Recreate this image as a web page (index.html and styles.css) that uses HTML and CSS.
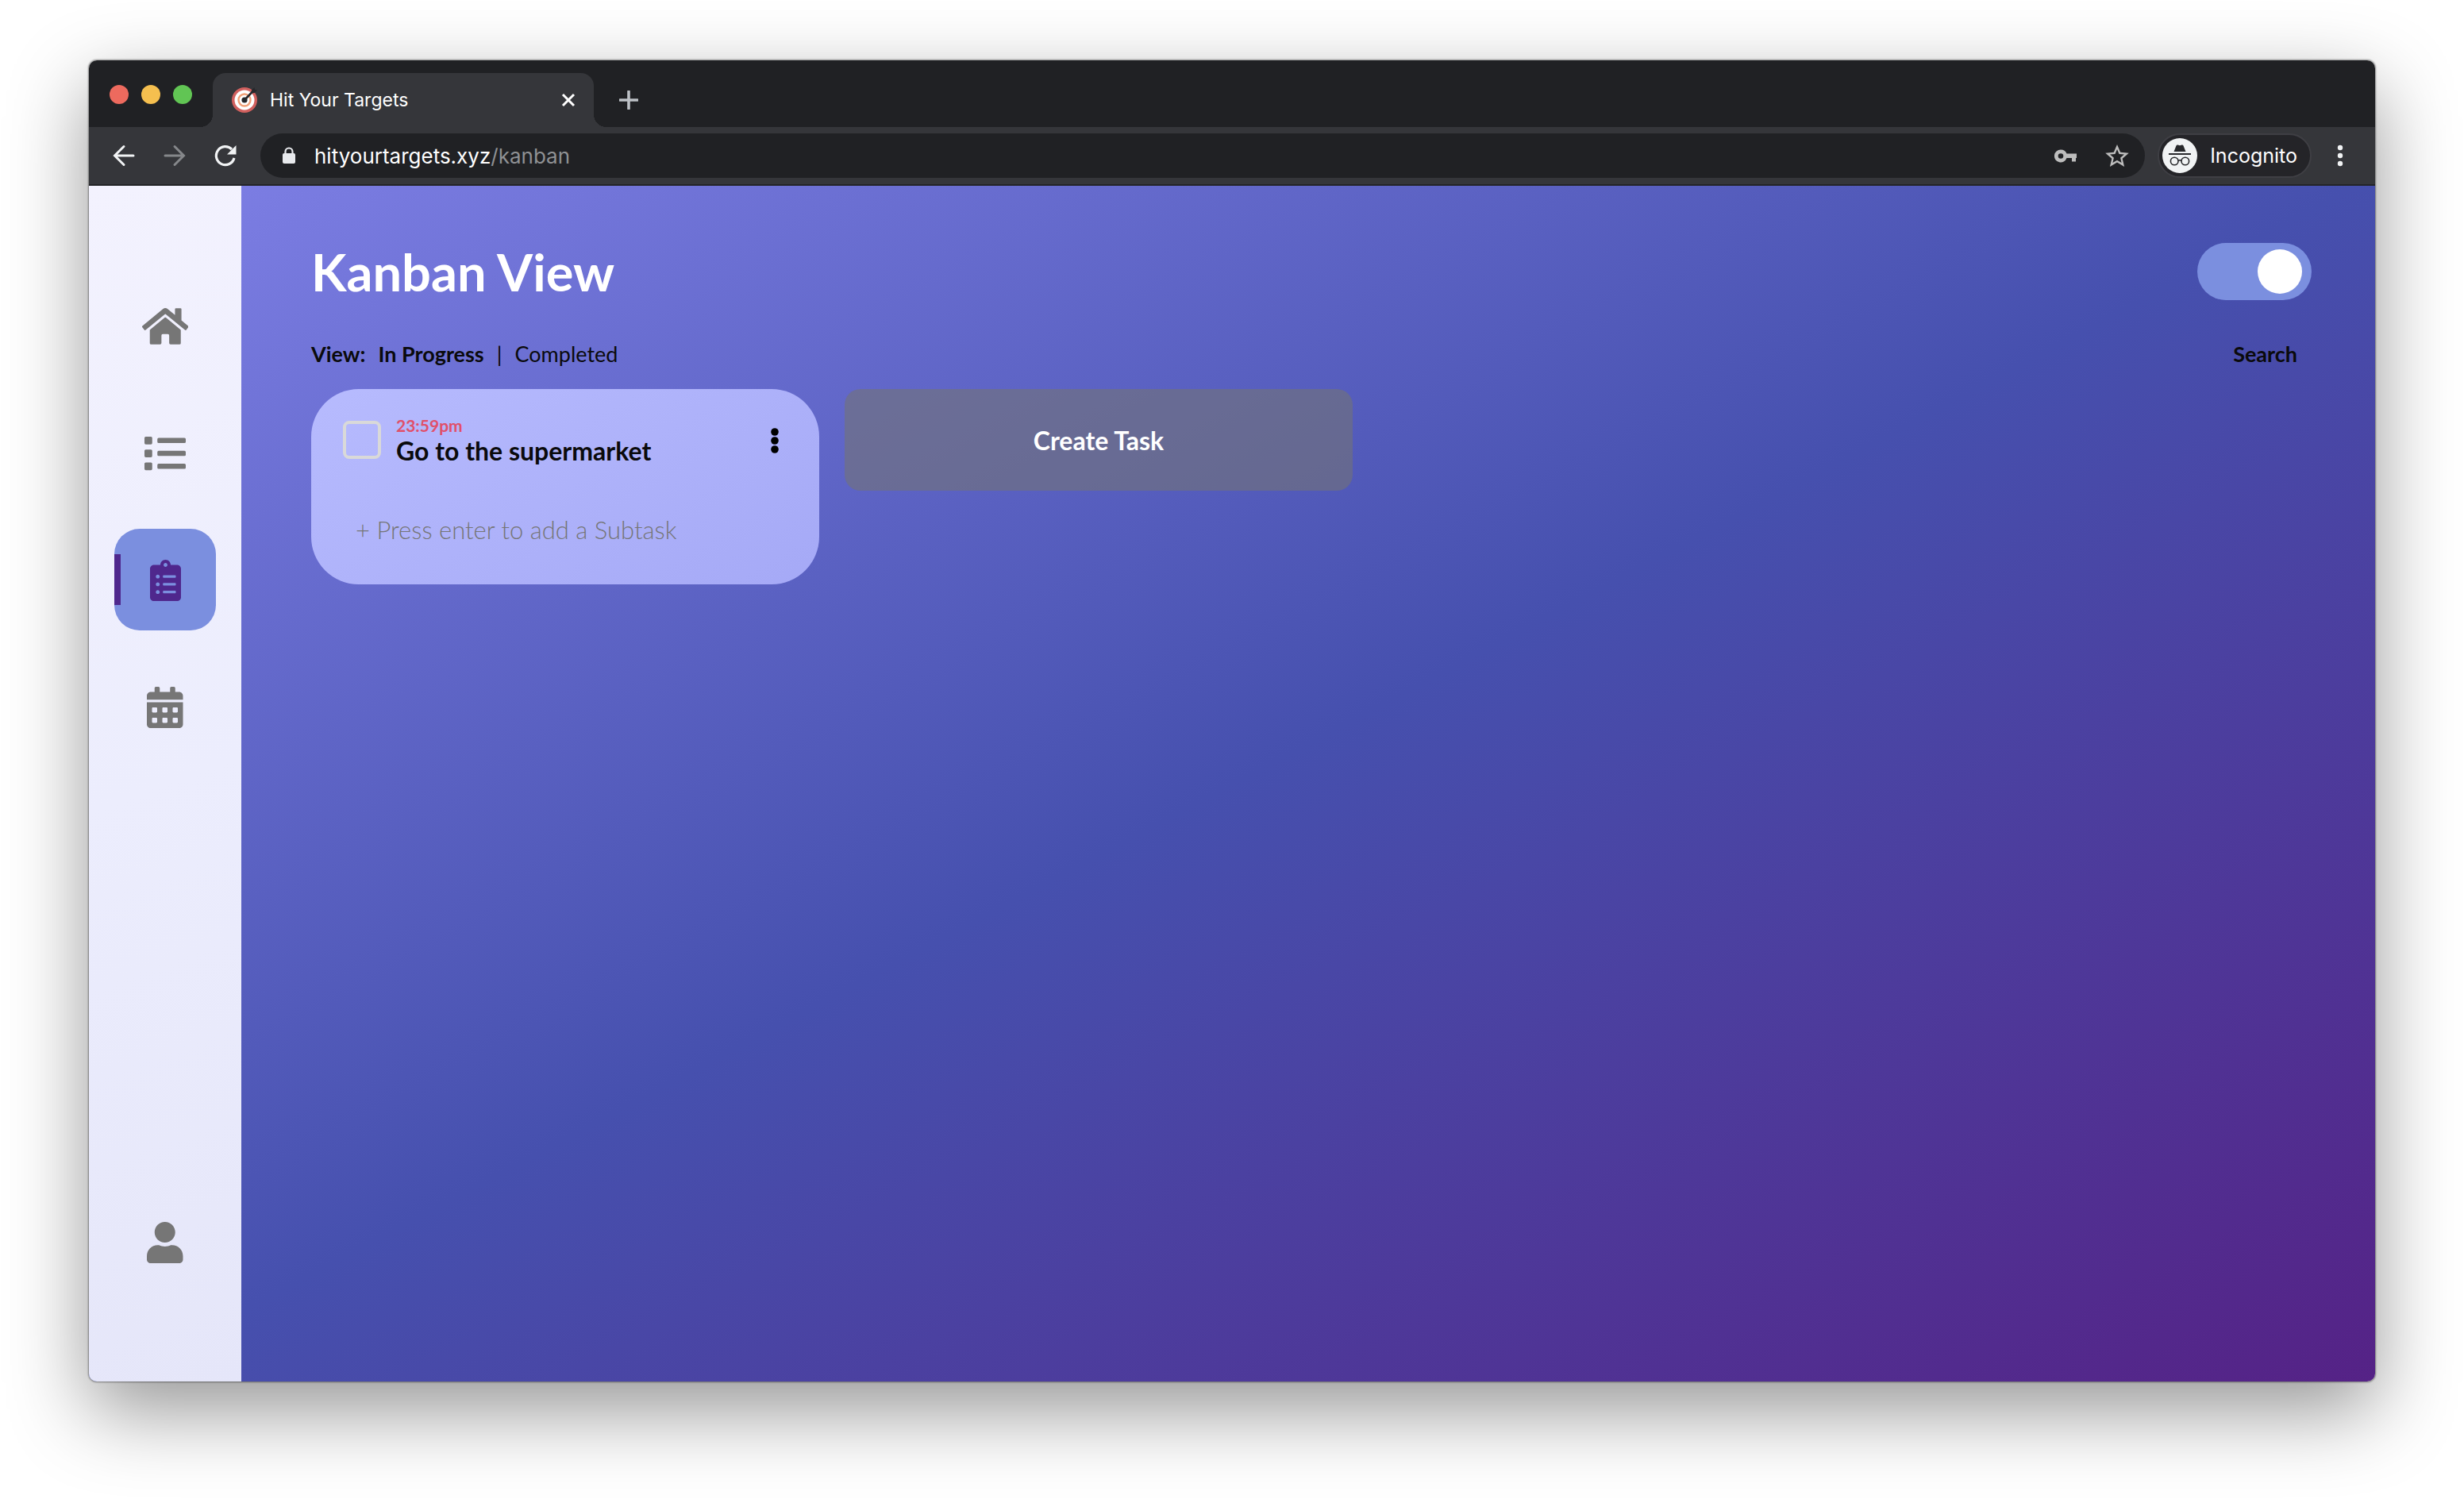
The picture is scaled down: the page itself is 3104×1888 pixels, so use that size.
FILE: index.html
```html
<!DOCTYPE html>
<html lang="en">
<head>
<meta charset="utf-8">
<meta name="viewport" content="width=device-width, initial-scale=1">
<title>Hit Your Targets</title>
<link rel="stylesheet" href="styles.css">
</head>
<body>
<div class="window">
  <header class="titlebar">
    <div class="lights">
      <button class="light light-close" aria-label="Close window"></button>
      <button class="light light-min" aria-label="Minimise window"></button>
      <button class="light light-max" aria-label="Maximise window"></button>
    </div>
    <div class="tab">
      <svg class="favicon" viewBox="0 0 32 32" aria-hidden="true">
        <circle cx="16" cy="16" r="16" fill="#d1605e"/>
        <circle cx="16" cy="16" r="12.5" fill="#fff"/>
        <circle cx="16" cy="16" r="7.5" fill="none" stroke="#f0a078" stroke-width="2.4"/>
        <circle cx="16" cy="16" r="3.6" fill="#26272b"/>
        <path d="M16 16L27 4.5" stroke="#26272b" stroke-width="2.6"/>
        <path d="M24.500 7.500L25 3.500L28.500 0L29 3L32 3.500L28.500 7Z" fill="#26272b"/>
      </svg>
      <span class="tab-title">Hit Your Targets</span>
      <button class="plain tab-close" aria-label="Close tab">
        <svg viewBox="0 0 20 20" width="20" height="20"><path d="M3 3L17 17M17 3L3 17" stroke="#fff" stroke-width="3"/></svg>
      </button>
    </div>
    <button class="plain new-tab" aria-label="New tab">
      <svg viewBox="0 0 24 24" width="24" height="24"><path d="M12 1V23M1 12H23" stroke="#bdc1c6" stroke-width="3.600" stroke-linecap="round"/></svg>
    </button>
  </header>

  <div class="toolbar">
    <button class="plain nav" aria-label="Back">
      <svg viewBox="0 0 32 32" width="32" height="32" fill="none" stroke="#f1f3f4" stroke-width="3" stroke-linecap="round"><path d="M28 16H5M16 4.500L4.500 16L16 27.500"/></svg>
    </button>
    <button class="plain nav" aria-label="Forward">
      <svg viewBox="0 0 32 32" width="32" height="32" fill="none" stroke="#85878a" stroke-width="3" stroke-linecap="round"><path d="M4 16H27M16 4.500L27.500 16L16 27.500"/></svg>
    </button>
    <button class="plain nav" aria-label="Reload">
      <svg viewBox="0 0 32 32" width="32" height="32"><path d="M27 19A11.500 11.500 0 1 1 24 8" fill="none" stroke="#f1f3f4" stroke-width="3.200"/><path d="M29.500 3V14.500H18Z" fill="#f1f3f4"/></svg>
    </button>
    <div class="omnibox">
      <svg class="lock" viewBox="0 0 16 22" aria-hidden="true"><rect y="8" width="16" height="13" rx="2" fill="#e8eaed"/><path d="M3.500 9V6A4.500 4.500 0 0 1 12.500 6V9" fill="none" stroke="#e8eaed" stroke-width="2.200"/></svg>
      <span class="url">hityourtargets.xyz<span class="url-path">/kanban</span></span>
      <button class="plain" aria-label="Saved passwords">
        <svg viewBox="0 0 28 17" width="28" height="17" fill="#bdbdbd"><path fill-rule="evenodd" d="M8 0.500A8 8 0 1 0 15.500 11H22V15.500H27V11H28V5.500H15.500A8 8 0 0 0 8 0.500ZM8 5.200A3.300 3.300 0 1 1 8 11.800A3.300 3.300 0 1 1 8 5.200Z"/></svg>
      </button>
      <button class="plain" aria-label="Bookmark this page">
        <svg viewBox="2 2 20 19" width="30" height="28" fill="#bdbdbd"><path d="M22 9.240l-7.190-.62L12 2 9.190 8.630 2 9.240l5.460 4.730L5.820 21 12 17.270 18.180 21l-1.630-7.030L22 9.240zM12 15.400l-3.760 2.270 1-4.280-3.320-2.880 4.380-.38L12 6.100l1.710 4.040 4.380.38-3.320 2.880 1 4.280L12 15.400z"/></svg>
      </button>
    </div>
    <button class="incognito">
      <svg viewBox="0 0 44 44" width="44" height="44" aria-hidden="true">
        <circle cx="22" cy="22" r="22" fill="#f1f3f4"/>
        <path d="M14.500 17L17.500 9.500Q18 8 19.500 8.500L22 9.200L24.500 8.500Q26 8 26.500 9.500L29.500 17Z" fill="#28292c"/>
        <path d="M8 20H36" stroke="#28292c" stroke-width="1.800"/>
        <g fill="none" stroke="#28292c" stroke-width="1.600"><circle cx="15.200" cy="29" r="4.800"/><circle cx="28.800" cy="29" r="4.800"/><path d="M20 28.500Q22 27 24 28.500"/></g>
      </svg>
      <span>Incognito</span>
    </button>
    <button class="plain browser-menu" aria-label="Browser menu">
      <svg viewBox="0 0 8 28" width="8" height="28" fill="#f1f3f4"><circle cx="4" cy="4" r="3.200"/><circle cx="4" cy="14" r="3.200"/><circle cx="4" cy="24" r="3.200"/></svg>
    </button>
  </div>

  <div class="app">
    <nav class="sidebar" aria-label="Main">
      <a class="side-link" href="#home" aria-label="Home">
        <svg viewBox="0 0 576 512"><path d="M280.370 148.260L96 300.110V464a16 16 0 0 0 16 16l112.060-.29a16 16 0 0 0 15.920-16V368a16 16 0 0 1 16-16h64a16 16 0 0 1 16 16v95.640a16 16 0 0 0 16 16.050L464 480a16 16 0 0 0 16-16V300L295.670 148.260a12.190 12.190 0 0 0-15.300 0zM571.600 251.470L488 182.560V44.050a12 12 0 0 0-12-12h-56a12 12 0 0 0-12 12v72.610L318.470 43a48 48 0 0 0-61 0L4.340 251.470a12 12 0 0 0-1.600 16.900l25.500 31A12 12 0 0 0 45.150 301l235.220-193.740a12.190 12.190 0 0 1 15.300 0L530.900 301a12 12 0 0 0 16.900-1.600l25.500-31a12 12 0 0 0-1.700-16.930z"/></svg>
      </a>
      <a class="side-link" href="#list" aria-label="List">
        <svg viewBox="0 0 512 512"><path d="M80 368H16a16 16 0 0 0-16 16v64a16 16 0 0 0 16 16h64a16 16 0 0 0 16-16v-64a16 16 0 0 0-16-16zm0-320H16A16 16 0 0 0 0 64v64a16 16 0 0 0 16 16h64a16 16 0 0 0 16-16V64a16 16 0 0 0-16-16zm0 160H16a16 16 0 0 0-16 16v64a16 16 0 0 0 16 16h64a16 16 0 0 0 16-16v-64a16 16 0 0 0-16-16zm416 176H176a16 16 0 0 0-16 16v32a16 16 0 0 0 16 16h320a16 16 0 0 0 16-16v-32a16 16 0 0 0-16-16zm0-320H176a16 16 0 0 0-16 16v32a16 16 0 0 0 16 16h320a16 16 0 0 0 16-16V80a16 16 0 0 0-16-16zm0 160H176a16 16 0 0 0-16 16v32a16 16 0 0 0 16 16h320a16 16 0 0 0 16-16v-32a16 16 0 0 0-16-16z"/></svg>
      </a>
      <a class="side-link active" href="#kanban" aria-label="Kanban" aria-current="page">
        <svg viewBox="0 0 384 512"><path d="M336 64h-80c0-35.300-28.700-64-64-64s-64 28.700-64 64H48C21.500 64 0 85.500 0 112v352c0 26.500 21.500 48 48 48h288c26.500 0 48-21.500 48-48V112c0-26.500-21.500-48-48-48zM96 424c-13.300 0-24-10.700-24-24s10.700-24 24-24 24 10.700 24 24-10.700 24-24 24zm0-96c-13.300 0-24-10.700-24-24s10.700-24 24-24 24 10.700 24 24-10.700 24-24 24zm0-96c-13.300 0-24-10.700-24-24s10.700-24 24-24 24 10.700 24 24-10.700 24-24 24zm96-192c13.300 0 24 10.700 24 24s-10.700 24-24 24-24-10.700-24-24 10.700-24 24-24zm128 368c0 4.400-3.600 8-8 8H168c-4.400 0-8-3.600-8-8v-16c0-4.400 3.600-8 8-8h144c4.400 0 8 3.600 8 8v16zm0-96c0 4.400-3.600 8-8 8H168c-4.400 0-8-3.600-8-8v-16c0-4.400 3.600-8 8-8h144c4.400 0 8 3.600 8 8v16zm0-96c0 4.400-3.600 8-8 8H168c-4.400 0-8-3.600-8-8v-16c0-4.400 3.600-8 8-8h144c4.400 0 8 3.600 8 8v16z"/></svg>
      </a>
      <a class="side-link" href="#calendar" aria-label="Calendar">
        <svg viewBox="0 0 448 512"><path fill-rule="evenodd" d="M0 464c0 26.500 21.500 48 48 48h352c26.500 0 48-21.500 48-48V192H0v272zm320-196c0-6.600 5.400-12 12-12h40c6.600 0 12 5.400 12 12v40c0 6.600-5.400 12-12 12h-40c-6.600 0-12-5.400-12-12v-40zm0 128c0-6.600 5.400-12 12-12h40c6.600 0 12 5.400 12 12v40c0 6.600-5.400 12-12 12h-40c-6.600 0-12-5.400-12-12v-40zM192 268c0-6.600 5.400-12 12-12h40c6.600 0 12 5.400 12 12v40c0 6.600-5.400 12-12 12h-40c-6.600 0-12-5.400-12-12v-40zm0 128c0-6.600 5.400-12 12-12h40c6.600 0 12 5.400 12 12v40c0 6.600-5.400 12-12 12h-40c-6.600 0-12-5.400-12-12v-40zM64 268c0-6.600 5.400-12 12-12h40c6.600 0 12 5.400 12 12v40c0 6.600-5.400 12-12 12H76c-6.600 0-12-5.400-12-12v-40zm0 128c0-6.600 5.400-12 12-12h40c6.600 0 12 5.400 12 12v40c0 6.600-5.400 12-12 12H76c-6.600 0-12-5.400-12-12v-40zM400 64h-48V16c0-8.800-7.200-16-16-16h-32c-8.800 0-16 7.200-16 16v48H160V16c0-8.800-7.200-16-16-16h-32c-8.800 0-16 7.200-16 16v48H48C21.500 64 0 85.500 0 112v48h448v-48c0-26.500-21.500-48-48-48z"/></svg>
      </a>
      <a class="side-link side-bottom" href="#profile" aria-label="Profile">
        <svg viewBox="0 0 448 512"><path d="M224 256c70.700 0 128-57.300 128-128S294.700 0 224 0 96 57.300 96 128s57.300 128 128 128zm89.600 32h-16.700c-22.200 10.200-46.900 16-72.900 16s-50.600-5.800-72.900-16h-16.700C60.200 288 0 348.200 0 422.400V464c0 26.500 21.500 48 48 48h352c26.500 0 48-21.500 48-48v-41.600c0-74.200-60.200-134.400-134.400-134.400z"/></svg>
      </a>
    </nav>

    <main class="main">
      <div class="head">
        <h1>Kanban View</h1>
        <input class="toggle" type="checkbox" role="switch" aria-label="Theme" checked>
      </div>
      <div class="filters">
        <strong>View:</strong>
        <button class="plain chosen">In Progress</button>
        <span>|</span>
        <button class="plain">Completed</button>
        <button class="plain search">Search</button>
      </div>
      <div class="board">
        <section class="card">
          <div class="task">
            <input class="tick" type="checkbox" id="task-1">
            <label class="task-text" for="task-1">
              <span class="time">23:59pm</span>
              <span class="name">Go to the supermarket</span>
            </label>
            <button class="plain task-menu" aria-label="Task options">
              <svg viewBox="0 0 12 44" width="12" height="44"><circle cx="6" cy="8" r="4.800"/><circle cx="6" cy="19" r="4.800"/><circle cx="6" cy="30" r="4.800"/></svg>
            </button>
          </div>
          <input class="subtask" type="text" aria-label="New subtask" placeholder="+ Press enter to add a Subtask">
        </section>
        <button class="create">Create Task</button>
      </div>
    </main>
  </div>
</div>
</body>
</html>
```

FILE: styles.css
```css
* { box-sizing: border-box; }

body {
  margin: 0;
  min-height: 100vh;
  display: flex;
  padding: 76px 112px 148px;
  background: #fff;
  font-family: Lato, sans-serif;
  color: #0a0a0c;
}

button, input { font: inherit; color: inherit; margin: 0; }

button { cursor: pointer; }

svg { display: block; }

.plain {
  background: none;
  border: 0;
  padding: 0;
}

.window {
  flex: 1;
  display: flex;
  flex-direction: column;
  border-radius: 10px;
  overflow: hidden;
  box-shadow: 0 0 2px 1px rgba(0, 0, 0, .4), 0 36px 100px rgba(0, 0, 0, .42);
}

/* Browser chrome */
.titlebar {
  height: 84px;
  display: flex;
  align-items: flex-end;
  background: #202124;
  font-family: Inter, sans-serif;
}

.lights {
  display: flex;
  gap: 16px;
  width: 156px;
  padding: 0 0 29px 26px;
}

.light {
  width: 24px;
  height: 24px;
  padding: 0;
  border: 0;
  border-radius: 50%;
}

.light-close { background: #ed6a5e; }
.light-min { background: #f5bf4f; }
.light-max { background: #61c554; }

.tab {
  position: relative;
  width: 480px;
  height: 68px;
  display: flex;
  align-items: center;
  padding: 0 22px 0 24px;
  border-radius: 16px 16px 0 0;
  background: #35363a;
}

.tab::before, .tab::after {
  content: "";
  position: absolute;
  bottom: 0;
  width: 16px;
  height: 16px;
}

.tab::before {
  right: 100%;
  background: radial-gradient(circle at 0 0, transparent 16px, #35363a 16px);
}

.tab::after {
  left: 100%;
  background: radial-gradient(circle at 100% 0, transparent 16px, #35363a 16px);
}

.favicon { width: 32px; height: 32px; }

.tab-title {
  flex: 1;
  padding-left: 16px;
  font-size: 23px;
  color: #fff;
}

.new-tab { padding: 0 32px 22px; }

.toolbar {
  height: 74px;
  display: flex;
  align-items: center;
  gap: 32px;
  padding: 0 40px 0 28px;
  background: #35363a;
  border-bottom: 2px solid #232427;
  font-family: Inter, sans-serif;
}

.omnibox {
  flex: 1;
  height: 56px;
  display: flex;
  align-items: center;
  gap: 36px;
  padding: 0 20px 0 28px;
  margin: 0 -16px 0 -4px;
  border-radius: 28px;
  background: #202124;
}

.lock { width: 16px; height: 22px; }

.url {
  flex: 1;
  margin-left: -12px;
  font-size: 26px;
  color: #fff;
}

.url-path { color: #8f9194; }

.incognito {
  display: flex;
  align-items: center;
  gap: 16px;
  height: 56px;
  padding: 0 16px 0 4px;
  border: 2px solid #3f3f44;
  border-radius: 28px;
  background: #242428;
  font-size: 25px;
  color: #fff;
}

/* Application */
.app {
  flex: 1;
  display: flex;
  background: linear-gradient(152deg, #7f80e6, #4650ae 50%, #552286);
}

.sidebar {
  width: 192px;
  display: flex;
  flex-direction: column;
  align-items: center;
  gap: 32px;
  padding: 112px 0;
  background: linear-gradient(160deg, #f3f2fe, #ecedfd 50%, #e5e6f9);
}

.side-link {
  position: relative;
  width: 128px;
  height: 128px;
  display: flex;
  align-items: center;
  justify-content: center;
  padding-top: 2px;
  border-radius: 32px;
}

.side-link svg { height: 52px; fill: #767676; }

.side-link.active { background: #7b8fdf; }

.side-link.active svg { fill: #4f278d; }

.side-link.active::before {
  content: "";
  position: absolute;
  top: 32px;
  left: 0;
  width: 8px;
  height: 64px;
  background: #4f278d;
}

.side-bottom { margin-top: auto; }

.main { flex: 1; padding: 72px 80px 72px 88px; }

.head {
  display: flex;
  align-items: center;
  justify-content: space-between;
  margin-bottom: 50px;
}

h1 {
  margin: 0;
  font-size: 65px;
  line-height: 72px;
  color: #fff;
}

.toggle {
  appearance: none;
  display: flex;
  align-items: center;
  justify-content: flex-end;
  width: 144px;
  height: 72px;
  padding-right: 12px;
  border-radius: 36px;
  background: #7b8fdf;
}

.toggle::before {
  content: "";
  width: 56px;
  height: 56px;
  border-radius: 50%;
  background: #fff;
}

.filters {
  display: flex;
  gap: 16px;
  margin-bottom: 26px;
  font-size: 27px;
  line-height: 36px;
}

.chosen, .search { font-weight: 700; }

.search { margin: 0 18px 0 auto; }

.board {
  display: flex;
  align-items: flex-start;
  flex-wrap: wrap;
  gap: 32px;
}

.card {
  width: 640px;
  padding: 32px 40px 44px;
  border-radius: 60px;
  background: linear-gradient(150deg, #b7bbfe, #a5a9f6);
}

.task {
  display: flex;
  align-items: center;
  gap: 19px;
}

.tick {
  appearance: none;
  width: 48px;
  height: 48px;
  border: 4px solid #d9d9d9;
  border-radius: 8px;
}

.task-text {
  flex: 1;
  display: flex;
  flex-direction: column;
  font-weight: 700;
}

.time {
  font-size: 21px;
  line-height: 28px;
  color: #e0506a;
}

.name { font-size: 32px; line-height: 36px; }

.task-menu { padding: 8px 10px 0; }

.subtask {
  width: 100%;
  height: 50px;
  margin-top: 56px;
  padding: 0 16px;
  border: 0;
  background: none;
  font-size: 31px;
  font-weight: 300;
}

.subtask::placeholder { color: #757575; opacity: 1; }

.create {
  width: 640px;
  height: 128px;
  border: 0;
  border-radius: 20px;
  background: rgba(115, 115, 115, .58);
  font-size: 32px;
  font-weight: 700;
  color: #fff;
}
```
